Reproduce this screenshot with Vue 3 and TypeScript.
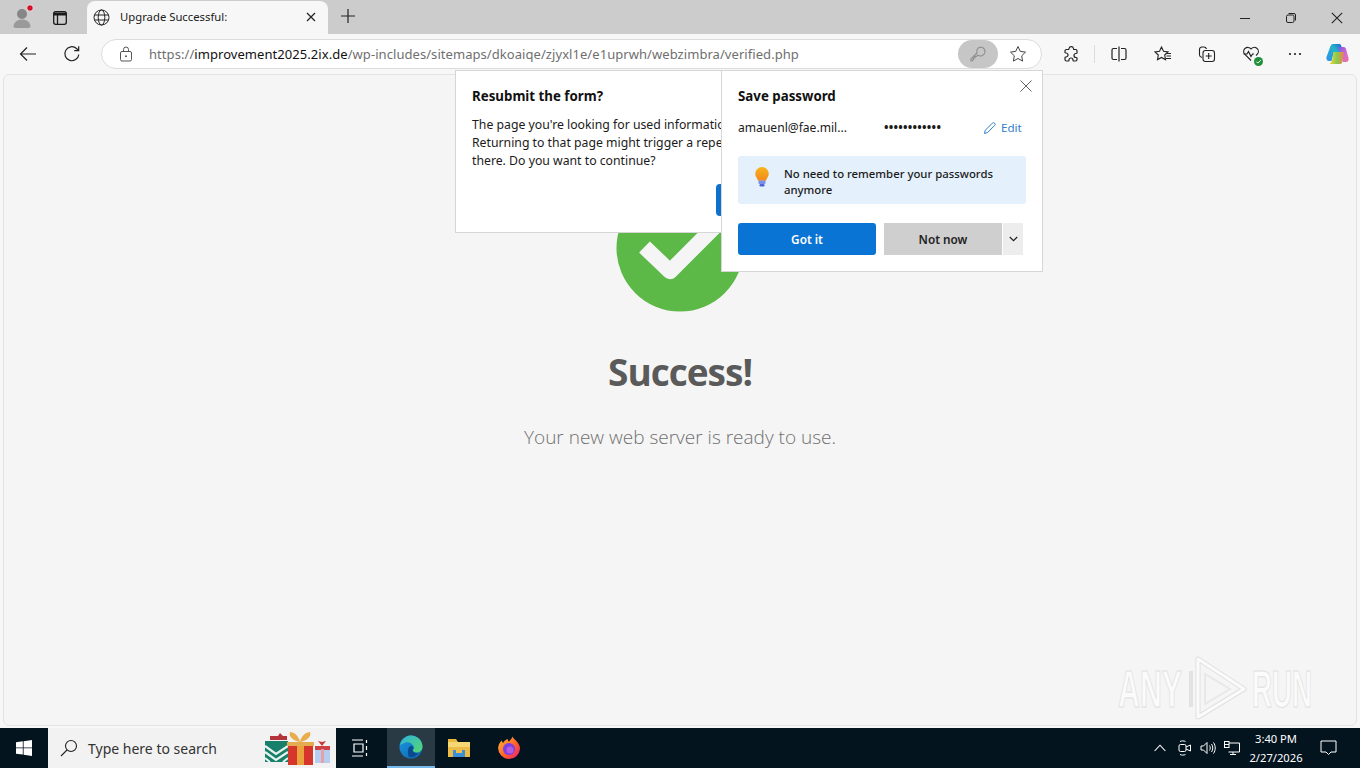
<script setup lang="ts">
const dots = '••••••••••••'
</script>

<template>
  <div class="screen">
    <header class="tabstrip">
      <div class="profile">
        <svg width="24" height="24" viewBox="0 0 24 24">
          <circle cx="11" cy="10" r="5" fill="#868686" />
          <path d="M2.500 23c0-5 4-7.500 8.500-7.500s8.500 2.500 8.500 7.500c-2 1.500-5 2-8.500 2s-6.500-.5-8.500-2z" fill="#9a9a9a" />
          <circle cx="19" cy="4" r="3.300" fill="#d3112a" stroke="#e6e6e6" stroke-width="1" />
        </svg>
      </div>
      <div class="tabs-btn">
        <svg width="16" height="16" viewBox="0 0 16 16" fill="none" stroke="#1a1a1a" stroke-width="1.300">
          <rect x="1.700" y="1.700" width="12.600" height="12.600" rx="2" />
          <path d="M1.700 4h12.600" stroke-width="3" />
          <path d="M5.500 5v9" />
        </svg>
      </div>
      <div class="tab">
        <svg class="globe" width="17" height="17" viewBox="0 0 17 17" fill="none" stroke="#222" stroke-width="1">
          <circle cx="8.500" cy="8.500" r="7.500" />
          <ellipse cx="8.500" cy="8.500" rx="3.300" ry="7.500" />
          <path d="M1.500 6h14M1.500 11h14" />
        </svg>
        <span class="tab-title">Upgrade Successful:</span>
        <svg class="tab-close" width="10" height="10" viewBox="0 0 10 10" stroke="#222" stroke-width="1.200">
          <path d="M1 1l8 8M9 1l-8 8" />
        </svg>
      </div>
      <svg class="plus" width="16" height="16" viewBox="0 0 16 16" stroke="#222" stroke-width="1.200">
        <path d="M8 1v14M1 8h14" />
      </svg>
      <div class="win-controls">
        <svg width="12" height="12" viewBox="0 0 12 12" stroke="#222" stroke-width="1"><path d="M1 6.500h10" /></svg>
        <svg width="12" height="12" viewBox="0 0 12 12" fill="none" stroke="#222" stroke-width="1">
          <rect x="1.500" y="3" width="7.500" height="7.500" rx="1.500" />
          <path d="M3.500 1.500h5.500a1.500 1.500 0 0 1 1.500 1.500v5.500" />
        </svg>
        <svg width="12" height="12" viewBox="0 0 12 12" stroke="#222" stroke-width="1.100"><path d="M.8.800l10.400 10.400M11.200.8L.8 11.200" /></svg>
      </div>
    </header>

    <nav class="toolbar">
      <svg class="back" width="18" height="16" viewBox="0 0 18 16" fill="none" stroke="#222" stroke-width="1.200">
        <path d="M17 8H1.500M8 1.500L1.500 8 8 14.500" />
      </svg>
      <svg class="reload" width="18" height="18" viewBox="0 0 18 18" fill="none" stroke="#222" stroke-width="1.200">
        <path d="M15.800 9.500A7 7 0 1 1 13.500 3.500L15.500 5.500M15.700 1.200v4.500h-4.500" />
      </svg>
      <div class="address">
        <svg class="lock" width="14" height="16" viewBox="0 0 14 16" fill="none" stroke="#555" stroke-width="1">
          <rect x="1.500" y="5.500" width="11" height="9.500" rx="1.500" />
          <path d="M4.500 5.500V3.500a2.500 2.500 0 0 1 5 0v2" />
          <circle cx="7" cy="10.300" r="1" fill="#555" stroke="none" />
        </svg>
        <span class="url"><span class="dim">https://</span>improvement2025.2ix.de<span class="dim">/wp-includes/sitemaps/dkoaiqe/zjyxl1e/e1uprwh/webzimbra/verified.php</span></span>
        <div class="key-pill">
          <svg width="18" height="18" viewBox="0 0 18 18" fill="none" stroke="#8d8d8d" stroke-width="1.100">
            <path d="M11.500 2a4.500 4.500 0 1 1-2.700 8.100L7.500 11.500H6v1.500H4.500v1.500L3 16H2v-2l6-6A4.500 4.500 0 0 1 11.500 2z" />
          </svg>
        </div>
        <svg class="star" width="18" height="18" viewBox="0 0 18 18" fill="none" stroke="#444" stroke-width="1">
          <path d="M9 1.500l2.300 4.900 5.200.7-3.800 3.700.9 5.300L9 13.500l-4.600 2.600.9-5.300-3.800-3.700 5.200-.7z" />
        </svg>
      </div>
      <div class="tools">
        <span class="tool">
          <svg width="18" height="18" viewBox="0 0 18 18" fill="none" stroke="#222" stroke-width="1.200">
            <path d="M7 3.500a2.300 2.300 0 0 1 4.500 0c0 .5 0 1 .3 1h2.200a1.500 1.500 0 0 1 1 1.500v2c0 .5-.5.500-1 .5a2 2 0 0 0 0 4c.5 0 1 0 1 .5v1.500a1.500 1.500 0 0 1-1.500 1.500h-2c-.5 0-.5-.5-.5-1a2 2 0 0 0-4 0c0 .5 0 1-.5 1H4.500A1.500 1.500 0 0 1 3 14.500v-2c0-.5.500-.5 1-.5a2 2 0 0 0 0-4c-.5 0-1 0-1-.5V6a1.500 1.500 0 0 1 1.500-1.500h2c.3 0 .5-.5.500-1z" />
          </svg>
        </span>
        <span class="tool-sep"></span>
        <span class="tool">
          <svg width="18" height="18" viewBox="0 0 18 18" fill="none" stroke="#222" stroke-width="1.200">
            <path d="M9 1.500v15M7 3.500H3.500a1.500 1.500 0 0 0-1.500 1.500v8a1.500 1.500 0 0 0 1.500 1.500H7M11 3.500h3.500A1.500 1.500 0 0 1 16 5v8a1.500 1.500 0 0 1-1.500 1.500H11" />
          </svg>
        </span>
        <span class="tool">
          <svg width="18" height="18" viewBox="0 0 18 18" fill="none" stroke="#222" stroke-width="1.100">
            <path d="M7.500 2l2 4.300 4.500.6-3.300 3.100.8 4.600-4-2.200-4 2.200.8-4.600L1 6.900l4.500-.6z" />
            <path d="M12 8.500h5M12.500 11h4.500M12 13.500h5" />
          </svg>
        </span>
        <span class="tool">
          <svg width="18" height="18" viewBox="0 0 18 18" fill="none" stroke="#222" stroke-width="1.100">
            <path d="M4 12.500c-1.500-.5-2.500-1-2.500-2.500V4.500A2.500 2.500 0 0 1 4 2h2c1.500 0 2 .5 2.500 2" />
            <rect x="5" y="5.500" width="11.500" height="11" rx="2.500" />
            <path d="M10.700 8v6M7.700 11h6" />
          </svg>
        </span>
        <span class="tool">
          <span class="health">
            <svg width="18" height="18" viewBox="0 0 18 18" fill="none" stroke="#222" stroke-width="1.100">
              <path d="M9 15.500L2.500 9A4 4 0 0 1 9 4a4 4 0 0 1 6.500 5L14 10.500" />
              <path d="M1.500 9H5l1.500-2.500 2.500 5 1.500-2.500H12" />
            </svg>
            <svg class="health-dot" width="9" height="9" viewBox="0 0 9 9">
              <circle cx="4.500" cy="4.500" r="4.500" fill="#1f8f3a" />
              <path d="M2.300 4.600l1.500 1.500 3-3" fill="none" stroke="#fff" stroke-width="1" />
            </svg>
          </span>
        </span>
        <span class="tool">
          <svg width="14" height="4" viewBox="0 0 14 4" fill="#222">
            <circle cx="2" cy="2" r="1.100" /><circle cx="7" cy="2" r="1.100" /><circle cx="12" cy="2" r="1.100" />
          </svg>
        </span>
        <span class="tool tool-last">
          <svg width="23" height="22" viewBox="0 0 23 22">
            <defs>
              <linearGradient id="cpA" x1="0" y1="1" x2="1" y2="0"><stop offset="0" stop-color="#2a8ff0" /><stop offset=".6" stop-color="#26b2c8" /><stop offset="1" stop-color="#1b5fd0" /></linearGradient>
              <linearGradient id="cpB" x1="0" y1="0" x2="1" y2="1"><stop offset="0" stop-color="#7a55e8" /><stop offset=".6" stop-color="#d66bd0" /><stop offset="1" stop-color="#f0708c" /></linearGradient>
              <linearGradient id="cpC" x1="0" y1="0" x2="1" y2="0"><stop offset="0" stop-color="#f8d23a" /><stop offset=".5" stop-color="#88cc4c" /><stop offset="1" stop-color="#f0824c" /></linearGradient>
            </defs>
            <path d="M7 1h6c1 0 2 .5 2.300 2L17 9H8L5.500 18H3C1 18 0 16 .5 14L4.500 3C5 1.700 6 1 7 1z" fill="url(#cpA)" />
            <path d="M12 4h5.500c1 0 2 .5 2.500 2l2.500 9c.5 2-.5 4-2.500 4H17z" fill="url(#cpB)" />
            <path d="M7.500 9H18l-1.500 9.500C16 20.500 15 21 13.500 21H3.500C5 20 6 18 6.500 15z" fill="url(#cpC)" />
          </svg>
        </span>
      </div>
    </nav>

    <main class="page-wrap">
      <section class="page">
        <svg class="check" width="128" height="128" viewBox="0 0 128 128">
          <circle cx="64" cy="64" r="63.500" fill="#5cb947" />
          <path d="M28.500 63L54 87.500 104 37.500" fill="none" stroke="#f5f5f5" stroke-width="15.500" stroke-linejoin="round" />
        </svg>
        <h1 class="success">Success!</h1>
        <p class="ready">Your new web server is ready to use.</p>
        <svg class="watermark" width="200" height="66" viewBox="0 0 200 66">
          <path d="M76 16v36" fill="none" stroke="#e2e2e2" stroke-width="4" />
          <path d="M83 4v58l46-28z" fill="none" stroke="#e0e0e0" stroke-width="5" stroke-linejoin="round" />
          <path d="M83 4v58l46-28z" fill="none" stroke="#fbfbfb" stroke-width="3" stroke-linejoin="round" />
          <path d="M90 19v30l25-15z" fill="none" stroke="#e8e8e8" stroke-width="2" />
          <text x="3" y="52" class="wm-text" textLength="64" lengthAdjust="spacingAndGlyphs">ANY</text>
          <text x="137" y="52" class="wm-text" textLength="60" lengthAdjust="spacingAndGlyphs">RUN</text>
        </svg>
      </section>

      <aside class="dialog">
        <h2 class="pop-title">Resubmit the form?</h2>
        <p class="dialog-text">The page you're looking for used information that you entered.<br />Returning to that page might trigger a repetition of any action you took<br />there. Do you want to continue?</p>
        <div class="dialog-actions"><span class="dialog-btn"></span></div>
      </aside>

      <aside class="save">
        <svg class="save-close" width="12" height="12" viewBox="0 0 12 12" stroke="#666" stroke-width="1">
          <path d="M.5.500l11 11M11.500.5l-11 11" />
        </svg>
        <h2 class="pop-title">Save password</h2>
        <div class="cred">
          <span class="cred-user">amauenl@fae.mil...</span>
          <span class="cred-pass">{{ dots }}</span>
          <span class="cred-edit">
            <svg width="14" height="14" viewBox="0 0 14 14" fill="none" stroke="#2f80c8" stroke-width="1">
              <path d="M1.500 12.500l.8-3.300 7-7a1.500 1.500 0 0 1 2.300 2.300l-7 7z" />
            </svg>
            Edit
          </span>
        </div>
        <div class="tip">
          <svg class="bulb" width="16" height="22" viewBox="0 0 16 22">
            <defs><linearGradient id="bulb" x1="0" y1="0" x2="0" y2="1"><stop offset="0" stop-color="#f9b21c" /><stop offset="1" stop-color="#f28a1e" /></linearGradient></defs>
            <path d="M8 1a6.800 6.800 0 0 1 6.800 6.800c0 3-2.300 4.500-2.800 7H4c-.5-2.500-2.800-4-2.800-7A6.800 6.800 0 0 1 8 1z" fill="url(#bulb)" />
            <rect x="4.500" y="14.500" width="7" height="3.500" rx="1" fill="#7a8fe8" />
            <rect x="5.500" y="18" width="5" height="2.500" rx="1.200" fill="#4c63d2" />
          </svg>
          <span class="tip-text">No need to remember your passwords anymore</span>
        </div>
        <div class="save-actions">
          <button class="got-it">Got it</button>
          <button class="not-now">Not now</button>
          <button class="drop">
            <svg width="9" height="6" viewBox="0 0 9 6" fill="none" stroke="#222" stroke-width="1.200"><path d="M.8 1l3.700 3.700L8.200 1" /></svg>
          </button>
        </div>
      </aside>
    </main>

    <footer class="taskbar">
      <div class="start">
        <svg width="16" height="16" viewBox="0 0 16 16" fill="#fff">
          <path d="M0 2.300l6.800-1v6.200H0zM7.600 1.200L16 0v7.500H7.600zM0 8.300h6.800v6.300L0 13.700zM7.600 8.300H16V16l-8.400-1.200z" />
        </svg>
      </div>
      <div class="search">
        <svg class="search-icon" width="18" height="18" viewBox="0 0 18 18" fill="none" stroke="#222" stroke-width="1.100">
          <circle cx="11" cy="7" r="5.500" /><path d="M7 11l-6 6" />
        </svg>
        <span class="search-text">Type here to search</span>
        <svg class="gifts" width="68" height="33" viewBox="0 0 68 33">
          <path d="M6 4h8l2-3 3 3h4v4H6z" fill="#b5333a" />
          <path d="M1 9h23v21H1z" fill="#16806a" />
          <path d="M1 14l11 8 12-8M1 20l11 8 12-8M1 26l5 4M24 26l-5 4" fill="none" stroke="#e8f2ee" stroke-width="2.200" />
          <rect x="24" y="10" width="25" height="23" fill="#d5352a" />
          <rect x="33" y="10" width="7" height="23" fill="#eba23c" />
          <rect x="23" y="10" width="27" height="4" fill="#e4ac4f" />
          <path d="M36 10C30 9 24 5 26 0c4 0 9 4 10 10 1-6 6-10 10-10 2 5-4 9-10 10z" fill="#e8ad4d" />
          <rect x="51" y="17" width="15" height="14" fill="#b5cdee" />
          <rect x="51" y="14" width="15" height="4" fill="#cf4146" />
          <rect x="57" y="17" width="3" height="14" fill="#e7a0a8" />
          <path d="M58 14l-4-5 4 1 4-1z" fill="#c93a3a" />
        </svg>
      </div>
      <div class="task-icons">
        <div class="task-slot first">
          <svg width="18" height="18" viewBox="0 0 18 18" fill="none" stroke="#fff" stroke-width="1.200">
            <path d="M1 1h11M1 17h11M3 5h9v8H3zM15.500 1v3M15.500 7v4M15.500 14v3" />
          </svg>
        </div>
        <div class="task-slot active">
          <svg width="24" height="24" viewBox="0 0 24 24">
            <defs>
              <linearGradient id="edgeA" x1="0" y1="0" x2="1" y2="1"><stop offset="0" stop-color="#2fb5d8" /><stop offset="1" stop-color="#56d66f" /></linearGradient>
              <linearGradient id="edgeB" x1="0" y1="0" x2="1" y2="1"><stop offset="0" stop-color="#1c9ae0" /><stop offset="1" stop-color="#0c5fb0" /></linearGradient>
            </defs>
            <circle cx="12" cy="12" r="11.500" fill="url(#edgeB)" />
            <path d="M1 10C3 3 8 .5 12 .5c6.500 0 11.500 5 11.500 11 0 4-3 6-6 6-2 0-4-1-3.500-2.500 1-1 1.500-2 .5-4C13 8 9.500 6.500 6.500 7.500 4 8.500 2 9.500 1 10z" fill="url(#edgeA)" />
            <path d="M9 16c0-3 1.500-5 3.500-5 1.200 0 1.800 1 1.500 2.500-1.500 2.500 1 5 5 4.500-2 3.500-6 5-9 4-1-2-1-4-1-6z" fill="#0a4a8e" />
          </svg>
        </div>
        <div class="task-slot">
          <svg width="24" height="22" viewBox="0 0 24 22">
            <path d="M1 2h8l2 3h12v15H1z" fill="#e9b83f" />
            <rect x="1" y="5" width="22" height="5" fill="#f7d774" />
            <rect x="1" y="10" width="22" height="10" fill="#ecbc46" />
            <rect x="6" y="13" width="12" height="7" fill="#3a8fd6" />
            <rect x="9" y="13" width="6" height="3" fill="#f2c14c" />
          </svg>
        </div>
        <div class="task-slot last">
          <svg width="24" height="24" viewBox="0 0 24 24">
            <defs>
              <linearGradient id="fx" x1="0" y1="0" x2="1" y2="1"><stop offset="0" stop-color="#ffbd2e" /><stop offset=".6" stop-color="#ff5a2c" /><stop offset="1" stop-color="#e31587" /></linearGradient>
            </defs>
            <path d="M12 23A11 11 0 0 1 1.200 11C2 7 4 5 5 4.500c0 1 .5 2 1 2.500C7.500 4.500 10 3 11 3c-.5 1 0 2 1 2.500C14 3.500 15 2 15.500.5c1 2.500 4 4 5.500 6.500 2 3 2 5 2 6A11 11 0 0 1 12 23z" fill="url(#fx)" />
            <circle cx="12" cy="13" r="6" fill="#7b3fe4" />
            <circle cx="13" cy="14" r="3.500" fill="#b45ce0" />
          </svg>
        </div>
      </div>
      <div class="tray">
        <svg class="chev" width="12" height="8" viewBox="0 0 12 8" fill="none" stroke="#fff" stroke-width="1.100"><path d="M.6 7L6 1.200 11.400 7" /></svg>
        <svg width="14" height="16" viewBox="0 0 14 16" fill="none" stroke="#fff" stroke-width="1">
          <rect x="1" y="4.500" width="7" height="7" rx="1.500" />
          <path d="M8 7l4.500-2v6L8 9M2 1.500c1.500-.8 4-.8 5.500 0M2 14.500c1.500.8 4 .8 5.500 0" />
        </svg>
        <svg width="16" height="14" viewBox="0 0 16 14" fill="none" stroke="#fff" stroke-width="1">
          <path d="M1 5h2.500L7 1.500v11L3.500 9H1zM9.500 4.500c1 1.500 1 3.500 0 5M11.500 3c1.700 2.300 1.700 5.700 0 8M13.500 1.500c2.300 3.300 2.300 7.700 0 11" />
        </svg>
        <svg width="16" height="15" viewBox="0 0 16 15" fill="none" stroke="#fff" stroke-width="1">
          <path d="M4 2h11.500v9H4.500M9 11v2.500M6 13.500h6" />
          <rect x=".5" y=".5" width="4.500" height="6" fill="#04141f" />
          <path d="M.5 3.500h4.500" />
        </svg>
        <div class="clock"><span>3:40 PM</span><span>2/27/2026</span></div>
        <svg class="notif" width="17" height="16" viewBox="0 0 17 16" fill="none" stroke="#fff" stroke-width="1"><path d="M1 1h15v11h-5l-2.500 2.500L6 12H1z" /></svg>
      </div>
    </footer>
  </div>
</template>

<style>
html, body { margin: 0; padding: 0; background: #f7f7f7; }
</style>

<style scoped>
.screen {
  width: 1360px;
  height: 768px;
  display: flex;
  flex-direction: column;
  overflow: hidden;
  font-family: "Open Sans", "Noto Sans", sans-serif;
  color: #111;
}
.tabstrip {
  height: 34px;
  flex: none;
  background: #cccccc;
  display: flex;
  align-items: flex-end;
}
.profile { width: 24px; height: 24px; margin: 0 0 6px 11px; }
.tabs-btn { margin: 0 0 9px 17px; height: 16px; width: 16px; }
.tab {
  width: 241px;
  height: 33px;
  margin-left: 19px;
  box-sizing: border-box;
  background: #f7f7f7;
  border-radius: 8px 8px 0 0;
  display: flex;
  align-items: center;
  padding: 0 12px 1px 6px;
}
.tab-title { flex: 1; margin: 0 0 1px 10px; font: 11.300px "Noto Sans", sans-serif; color: #1a1a1a; }
.plus { margin: 0 0 10px 12px; }
.win-controls { margin: 0 17px 10px auto; display: flex; gap: 34px; }
.toolbar {
  height: 36px;
  box-sizing: border-box;
  flex: none;
  background: #f7f7f7;
  display: flex;
  align-items: center;
  padding: 4px 0 0 19px;
}
.reload { margin-left: 26px; }
.address {
  width: 941px;
  height: 30px;
  margin-left: 20px;
  flex: none;
  box-sizing: border-box;
  background: #fff;
  border: 1px solid #dcdcdc;
  border-radius: 15px;
  display: flex;
  align-items: center;
  padding: 0 14px 0 17px;
}
.url { flex: 1; margin-left: 16px; font: 13px "Noto Sans", sans-serif; letter-spacing: .06px; color: #111; white-space: nowrap; }
.dim { color: #6f6f6f; }
.key-pill {
  width: 40px;
  height: 28px;
  border-radius: 14px;
  background: #c6c6c6;
  display: flex;
  align-items: center;
  justify-content: center;
  margin-right: 11px;
}
.tools { flex: none; display: flex; align-items: center; margin-left: 7px; }
.tool { width: 44px; height: 30px; display: flex; align-items: center; justify-content: center; }
.tool-last { width: 40px; }
.tool-sep { width: 1px; height: 18px; margin: 0 2px 0 1px; background: #dcdcdc; }
.health { position: relative; width: 18px; height: 18px; display: block; }
.health-dot { position: absolute; right: -3px; bottom: -3px; }
.page-wrap {
  flex: 1;
  min-height: 0;
  background: #f7f7f7;
  position: relative;
  padding: 4px 3px 2px;
  display: flex;
}
.page {
  flex: 1;
  background: #f5f5f5;
  border: 1px solid #e3e3e3;
  border-radius: 6px;
  display: flex;
  flex-direction: column;
  align-items: center;
  padding-top: 109px;
  position: relative;
  overflow: hidden;
}
.check { display: block; }
.success {
  margin: 34px 0 0;
  font: 700 37px/52px "Open Sans", sans-serif;
  letter-spacing: -1px;
  color: #5a5a5a;
}
.ready {
  margin: 25px 0 0;
  font: 300 19px/28px "Open Sans", sans-serif;
  color: #707070;
}
.watermark { position: absolute; right: 41px; bottom: 4px; }
.wm-text {
  font: 700 51px "Liberation Sans", sans-serif;
  fill: #fbfbfb;
  stroke: #e0e0e0;
  stroke-width: 1;
}
.dialog {
  position: absolute;
  left: 455px;
  top: 0;
  width: 268px;
  height: 163px;
  box-sizing: border-box;
  background: #fff;
  border: 1px solid #d6d6d6;
  padding: 15px 0 0 16px;
  overflow: hidden;
}
.pop-title { margin: 0; font: 700 13.300px/20px "Noto Sans", sans-serif; color: #111; }
.dialog-text {
  margin: 10px 0 0;
  font: 12.250px/18px "Noto Sans", sans-serif;
  color: #1a1a1a;
  white-space: nowrap;
}
.dialog-actions { position: absolute; right: 0; bottom: 16px; }
.dialog-btn { display: block; width: 6px; height: 32px; background: #0f6fcc; border-radius: 4px 0 0 4px; }
.save {
  position: absolute;
  left: 721px;
  top: 0;
  width: 322px;
  height: 202px;
  box-sizing: border-box;
  background: #fff;
  border: 1px solid #d6d6d6;
  padding: 15px 16px 0;
}
.save-close { position: absolute; right: 10px; top: 9px; }
.cred {
  display: flex;
  align-items: center;
  height: 18px;
  margin-top: 13px;
  font: 12.100px/18px "Noto Sans", sans-serif;
  color: #1a1a1a;
}
.cred-user { width: 146px; flex: none; }
.cred-pass { font-weight: 700; font-size: 12px; letter-spacing: .25px; width: 100px; flex: none; }
.cred-edit { display: flex; align-items: center; gap: 4px; color: #2f80c8; font-size: 11.600px; margin-left: -1px; }
.tip {
  margin-top: 19px;
  height: 48px;
  box-sizing: border-box;
  background: #e4f0fb;
  border-radius: 3px;
  display: flex;
  align-items: center;
  padding: 4px 16px 0;
  gap: 14px;
}
.bulb { flex: none; margin-top: -10px; }
.tip-text { font: 500 11.350px/16px "Noto Sans", sans-serif; color: #1a1a1a; }
.save-actions { margin-top: 19px; display: flex; }
.got-it, .not-now, .drop {
  border: 0;
  height: 32px;
  padding: 0;
  font: 600 11.800px "Noto Sans", sans-serif;
}
.got-it { width: 138px; background: #0a74d4; color: #fff; border-radius: 3px; margin-right: 8px; }
.not-now { width: 119px; background: #cfcfcf; color: #222; border-right: 1px solid #fff; }
.drop { width: 20px; background: #ededed; display: flex; align-items: center; justify-content: center; }
.taskbar {
  height: 40px;
  flex: none;
  background: #04141f;
  display: flex;
  align-items: center;
  color: #fff;
}
.start { width: 48px; flex: none; display: flex; justify-content: center; }
.search {
  width: 288px;
  flex: none;
  height: 40px;
  box-sizing: border-box;
  background: #f2f2f2;
  display: flex;
  align-items: center;
  padding: 0 4px 0 12px;
}
.search-icon { flex: none; }
.search-text { flex: 1; margin-left: 10px; font: 14px "Noto Sans", sans-serif; color: #333; }
.gifts { flex: none; }
.task-icons { display: flex; }
.task-slot { width: 48px; height: 40px; box-sizing: border-box; display: flex; align-items: center; justify-content: center; }
.task-slot.first { width: 51px; padding-right: 3px; }
.task-slot.last { margin-left: 2px; }
.task-slot.active { background: #2a3a45; border-bottom: 2px solid #76b9ed; }
.tray { margin-left: auto; display: flex; align-items: center; gap: 8px; padding-right: 23px; }
.chev { margin-right: 4px; }
.clock {
  display: flex;
  flex-direction: column;
  align-items: center;
  font: 11.200px/19px "Noto Sans", sans-serif;
  color: #fff;
  width: 56px;
}
.notif { margin-left: 8px; }
</style>
